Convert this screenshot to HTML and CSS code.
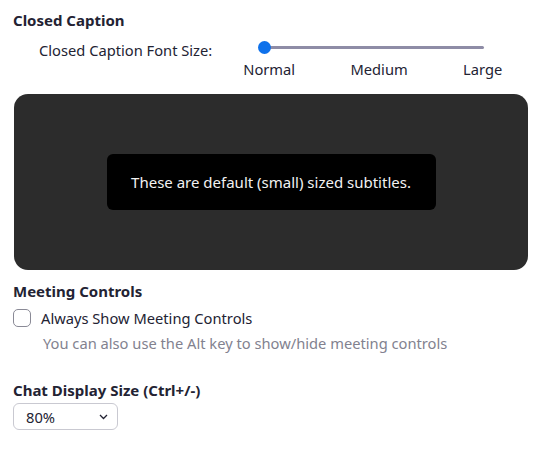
FILE: index.html
```html
<!DOCTYPE html>
<html>
<head>
<meta charset="utf-8">
<link rel="stylesheet" href="styles.css">
</head>
<body>
<div class="page">
  <div class="section-title cc-title">Closed Caption</div>
  <div class="font-row">
    <div class="font-label">Closed Caption Font Size:</div>
    <div class="slider">
      <div class="track-wrap">
        <div class="track"></div>
        <div class="knob"></div>
      </div>
      <div class="ticks">
        <span>Normal</span>
        <span>Medium</span>
        <span>Large</span>
      </div>
    </div>
  </div>
  <div class="preview">
    <div class="subtitle">These are default (small) sized subtitles.</div>
  </div>
  <div class="section-title mc-title">Meeting Controls</div>
  <label class="check-row">
    <span class="checkbox"></span>
    <span>Always Show Meeting Controls</span>
  </label>
  <div class="hint">You can also use the Alt key to show/hide meeting controls</div>
  <div class="section-title chat-title">Chat Display Size (Ctrl+/-)</div>
  <div class="select">
    <span>80%</span>
    <svg class="chev" width="9" height="6" viewBox="0 0 9 6"><path d="M1 1 L4.5 4.5 L8 1" fill="none" stroke="#232333" stroke-width="1.3"/></svg>
  </div>
</div>
</body>
</html>
```
FILE: styles.css
```css
* { box-sizing: border-box; }
body {
  margin: 0;
  background: #ffffff;
  font-family: "Noto Sans", "Open Sans", sans-serif;
  color: #232333;
  font-size: 14.7px;
}
.page {
  padding: 10px 0 0 13px;
}
.section-title {
  font-weight: 700;
  font-size: 15px;
  line-height: 20px;
}
.font-row {
  display: flex;
  align-items: flex-start;
  margin-top: 10px;
}
.font-label {
  margin-left: 26px;
  line-height: 20px;
}
.slider {
  margin-left: 31px;
  width: 259px;
  display: flex;
  flex-direction: column;
}
.track-wrap {
  position: relative;
  height: 14px;
  margin: 0 18px 0 22px;
}
.track {
  position: absolute;
  left: 0;
  right: 0;
  top: 6px;
  height: 3px;
  background: #8e8ca6;
  border-radius: 2px;
}
.knob {
  position: absolute;
  left: -7px;
  top: 1px;
  width: 13px;
  height: 13px;
  border-radius: 50%;
  background: #0e71eb;
}
.ticks {
  display: flex;
  justify-content: space-between;
  line-height: 20px;
  margin-top: 5px;
}
.preview {
  margin-top: 15px;
  width: 514px;
  height: 176px;
  background: #2c2c2c;
  border-radius: 14px;
  display: flex;
  align-items: center;
  justify-content: center;
  margin-left: 1px;
}
.subtitle {
  width: 329px;
  height: 56px;
  background: #000000;
  border-radius: 6px;
  color: #f2f2f2;
  display: flex;
  align-items: center;
  justify-content: center;
  font-size: 15px;
}
.mc-title {
  margin-top: 11px;
}
.check-row {
  display: flex;
  align-items: center;
  margin-top: 7px;
  line-height: 20px;
}
.checkbox {
  width: 18px;
  height: 18px;
  border: 1.5px solid #8a8a96;
  border-radius: 5px;
  margin-right: 10px;
}
.hint {
  margin-left: 30px;
  margin-top: 5px;
  color: #82828f;
  line-height: 20px;
}
.chat-title {
  margin-top: 27px;
}
.select {
  margin-top: 3px;
  width: 105px;
  height: 27px;
  border: 1px solid #c9c9d1;
  border-radius: 6px;
  display: flex;
  align-items: center;
  justify-content: space-between;
  padding: 0 9px 0 12px;
}
.chev { display: block; }
```
